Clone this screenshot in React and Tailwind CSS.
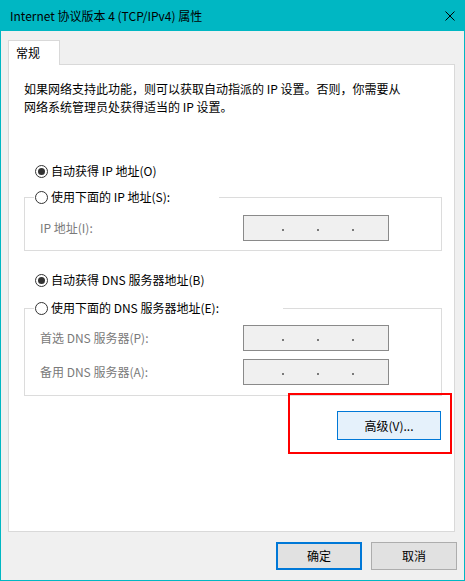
import React from "react";

function Radio({ checked }) {
  return (
    <span className="w-[13px] h-[13px] rounded-full border border-[#333333] bg-white flex items-center justify-center shrink-0">
      {checked ? <span className="w-[7px] h-[7px] rounded-full bg-[#333333]" /> : null}
    </span>
  );
}

function IpBox() {
  return (
    <div className="w-[146px] h-[26px] border border-[#8a8a8a] bg-[#f0f0f0] flex items-center pl-[38px] pt-[4px] gap-[33px] shrink-0">
      <span className="w-[2px] h-[2px] bg-[#7a7a7a]" />
      <span className="w-[2px] h-[2px] bg-[#7a7a7a]" />
      <span className="w-[2px] h-[2px] bg-[#7a7a7a]" />
    </div>
  );
}

function Field({ label }) {
  return (
    <div className="flex items-center">
      <span className="flex-1 pl-[15px] text-[#7a7a7a]">{label}</span>
      <div className="mr-[52px]">
        <IpBox />
      </div>
    </div>
  );
}

export default function App() {
  return (
    <div className="w-[465px] h-[581px] border border-[#00b7c3] bg-[#f0f0f0] flex flex-col text-[12px] leading-[18px] text-black font-['Noto_Sans_CJK_SC',sans-serif]">
      <div className="h-[30px] shrink-0 bg-[#00b7c3] flex items-center justify-between px-[9px]">
        <span>Internet 协议版本 4 (TCP/IPv4) 属性</span>
        <svg width="10" height="10" viewBox="0 0 10 10">
          <path d="M0.5 0.5 L9.5 9.5 M9.5 0.5 L0.5 9.5" stroke="#000" strokeWidth="1" fill="none" />
        </svg>
      </div>

      <div className="flex-1 flex flex-col px-[7px] pt-[9px]">
        <div className="relative z-10 -mb-px w-[52px] h-[25px] border border-b-0 border-[#d9d9d9] bg-white flex items-center pl-[7px]">
          常规
        </div>

        <div className="relative w-[447px] h-[468px] border border-[#d9d9d9] bg-white pt-[15px] pl-[15px]">
          <p>
            如果网络支持此功能，则可以获取自动指派的 IP 设置。否则，你需要从
            <br />
            网络系统管理员处获得适当的 IP 设置。
          </p>

          <div className="mt-[46px] ml-[11px] flex items-center gap-[3px]">
            <Radio checked />
            <span>自动获得 IP 地址(O)</span>
          </div>

          <fieldset className="mt-[8px] w-[418px] border border-[#dcdcdc] pb-[9px]">
            <legend className="ml-[9px] w-[185px] pl-[1px] bg-white">
              <div className="flex items-center gap-[3px]">
                <Radio />
                <span>使用下面的 IP 地址(S):</span>
              </div>
            </legend>
            <div className="mt-[9px]">
              <Field label="IP 地址(I):" />
            </div>
          </fieldset>

          <div className="mt-[20px] ml-[11px] flex items-center gap-[3px]">
            <Radio checked />
            <span>自动获得 DNS 服务器地址(B)</span>
          </div>

          <fieldset className="mt-[10px] w-[418px] border border-[#dcdcdc] pb-[10px]">
            <legend className="ml-[9px] w-[249px] pl-[1px] bg-white">
              <div className="flex items-center gap-[3px]">
                <Radio />
                <span>使用下面的 DNS 服务器地址(E):</span>
              </div>
            </legend>
            <div className="mt-[8px] flex flex-col gap-[8px]">
              <Field label="首选 DNS 服务器(P):" />
              <Field label="备用 DNS 服务器(A):" />
            </div>
          </fieldset>

          <div className="mt-[15px] w-[418px] flex justify-end pr-[1px]">
            <button className="w-[104px] h-[29px] border border-[#0078d7] bg-[#e5f1fb]">
              高级(V)...
            </button>
          </div>

          <div className="absolute left-[279px] top-[328px] w-[164px] h-[61px] border-2 border-[#ff0000]" />
        </div>

        <div className="mt-[10px] flex justify-end gap-[9px]">
          <button className="w-[86px] h-[28px] border-2 border-[#0078d7] bg-[#e1e1e1]">确定</button>
          <button className="w-[86px] h-[28px] border border-[#adadad] bg-[#e1e1e1]">取消</button>
        </div>
      </div>
    </div>
  );
}
